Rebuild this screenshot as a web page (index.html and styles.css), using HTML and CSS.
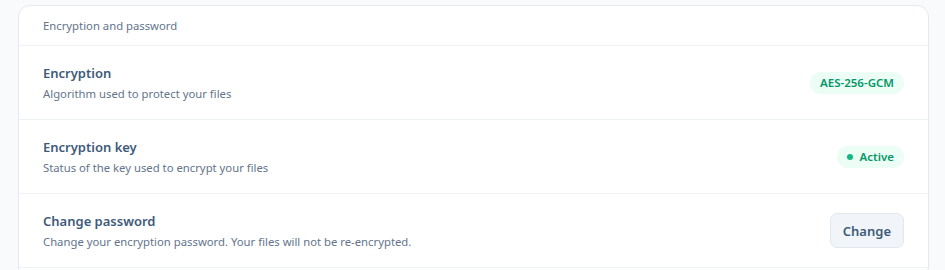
FILE: index.html
```html
<!DOCTYPE html>
<html lang="en">
<head>
  <meta charset="UTF-8">
  <meta name="viewport" content="width=device-width, initial-scale=1.0">
  <title>Encryption settings</title>
  <link rel="stylesheet" href="styles.css">
</head>
<body>

  <!-- Settings card -->
  <section class="card">
    <div class="card-header">Encryption and password</div>

    <div class="row">
      <div class="row-text">
        <h3>Encryption</h3>
        <p>Algorithm used to protect your files</p>
      </div>
      <span class="badge">AES-256-GCM</span>
    </div>

    <div class="row">
      <div class="row-text">
        <h3>Encryption key</h3>
        <p>Status of the key used to encrypt your files</p>
      </div>
      <span class="badge"><span class="dot"></span>Active</span>
    </div>

    <div class="row">
      <div class="row-text">
        <h3>Change password</h3>
        <p>Change your encryption password. Your files will not be re-encrypted.</p>
      </div>
      <button class="btn">Change</button>
    </div>
  </section>

</body>
</html>
```

FILE: styles.css
```css
/* General Styles */
body {
  font-family: "Noto Sans", "Open Sans", sans-serif;
  margin: 0;
  padding: 5px 16px 0 18px;
  background-color: #f8fafc;
  color: #334e68;
}

.card {
  background-color: #fff;
  border: 1px solid #e5e9ef;
  border-radius: 12px;
  padding-bottom: 10px;
}

.card-header {
  height: 39px;
  display: flex;
  align-items: center;
  padding: 0 24px;
  font-size: 11.3px;
  color: #64748b;
  border-bottom: 1px solid #eef1f5;
}

.row {
  height: 73px;
  display: flex;
  align-items: center;
  justify-content: space-between;
  padding: 0 24px;
  border-bottom: 1px solid #eef1f5;
}

.row-text h3 {
  margin: -1px 0 4px;
  font-size: 13px;
  font-weight: 600;
  color: #3e5a7a;
}

.row-text p {
  margin: 0;
  font-size: 11.3px;
  color: #64748b;
}

.badge {
  display: inline-flex;
  align-items: center;
  gap: 7px;
  height: 22px;
  padding: 0 10px;
  border-radius: 11px;
  background-color: #ecfdf5;
  color: #059669;
  font-size: 11.5px;
  font-weight: 600;
}

.badge .dot {
  width: 6px;
  height: 6px;
  border-radius: 50%;
  background-color: #10b981;
}

.btn {
  height: 35px;
  padding: 0 12px;
  background-color: #f1f5f9;
  border: 1px solid #e2e8f0;
  border-radius: 7px;
  font-family: inherit;
  font-size: 13px;
  font-weight: 600;
  color: #3e5a7a;
  cursor: pointer;
}
```
